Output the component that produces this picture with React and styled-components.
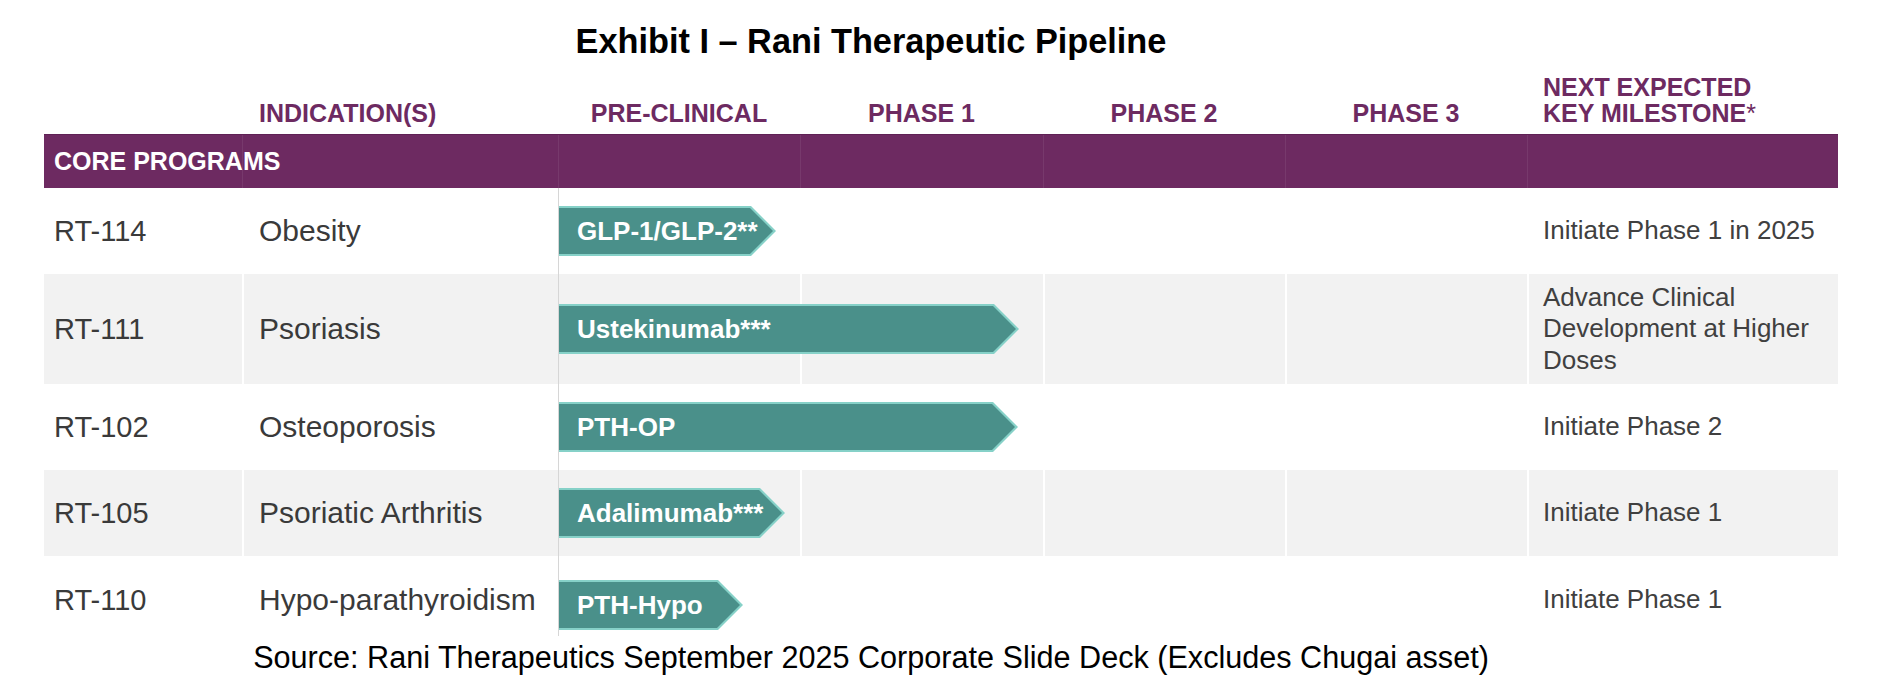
import React from 'react';
import styled, { createGlobalStyle } from 'styled-components';

const GlobalStyle = createGlobalStyle`
  html, body {
    margin: 0;
    padding: 0;
    background: #fff;
  }
  body {
    font-family: "Liberation Sans", Arial, sans-serif;
  }
`;

// column widths of the pipeline table
const COLS = '198px 316px 242px 243px 242px 242px 311px';
const PURPLE = '#6d2a61';

const Page = styled.div`
  width: 1886px;
  height: 694px;
  overflow: hidden;
  background: #fff;
`;

const Title = styled.h1`
  margin: 0;
  padding: 21px 144px 0 0;
  font-size: 34.3px;
  line-height: 40px;
  font-weight: bold;
  text-align: center;
  color: #000;
`;

const Table = styled.div`
  margin-left: 44px;
  width: 1794px;
`;

const HeadRow = styled.div`
  display: grid;
  grid-template-columns: ${COLS};
  align-items: end;
  height: 73px;
  box-sizing: border-box;
  padding-bottom: 8px;
`;

const HeadCell = styled.div`
  font-size: 25px;
  line-height: 26px;
  font-weight: bold;
  color: ${PURPLE};
  text-align: ${(p) => (p.$center ? 'center' : 'left')};
  padding-left: ${(p) => p.$pad || 0}px;
`;

const Star = styled.span`
  font-weight: normal;
`;

const Band = styled.div`
  display: grid;
  grid-template-columns: ${COLS};
  height: 54px;
  box-sizing: border-box;
  border-top: 1px solid #5f2155;
  background: ${PURPLE};
`;

const BandCell = styled.div`
  grid-row: 1;
  grid-column: ${(p) => p.$col};
  border-left: ${(p) => (p.$col === 1 ? 'none' : '1px solid rgba(255, 255, 255, 0.07)')};
`;

const BandLabel = styled.div`
  grid-row: 1;
  grid-column: 1 / 4;
  align-self: center;
  padding-left: 10px;
  font-size: 25px;
  font-weight: bold;
  color: #fff;
`;

const Row = styled.div`
  display: grid;
  grid-template-columns: ${COLS};
  height: ${(p) => p.$h}px;
`;

const Cell = styled.div`
  grid-row: 1;
  grid-column: ${(p) => p.$col};
  display: flex;
  align-items: center;
  box-sizing: border-box;
  padding-top: ${(p) => p.$dy || 0}px;
  background: ${(p) => (p.$shade ? '#f2f2f2' : '#fff')};
  border-left: ${(p) => {
    if (p.$col === 1) return 'none';
    if (p.$col === 3) return '1px solid #d6d6d6';
    return '2px solid #fff';
  }};
  color: #3a3a3a;
`;

const Code = styled.span`
  padding-left: 10px;
  font-size: 29px;
`;

const Indication = styled.span`
  padding-left: 15px;
  font-size: 30px;
  white-space: nowrap;
`;

const Milestone = styled.span`
  padding: 0 8px 0 14px;
  font-size: 26px;
  line-height: 31.5px;
  color: #404040;
`;

const Arrow = styled.div`
  grid-row: 1;
  grid-column: 3 / 8;
  justify-self: start;
  align-self: center;
  margin-left: 1px;
  margin-top: ${(p) => p.$dy || 0}px;
  height: 50px;
  box-sizing: border-box;
  padding: 2px 3px 2px 0;
  background: #86d1c8;
  clip-path: polygon(0 0, calc(100% - 25px) 0, 100% 50%, calc(100% - 25px) 100%, 0 100%);
`;

const ArrowFill = styled.div`
  display: flex;
  align-items: center;
  height: 100%;
  padding-left: 18px;
  background: #4a908a;
  clip-path: polygon(0 0, calc(100% - 23px) 0, 100% 50%, calc(100% - 23px) 100%, 0 100%);
  font-size: 26px;
  font-weight: bold;
  color: #fff;
  white-space: nowrap;
`;

const Source = styled.p`
  margin: 3px 0 0;
  padding-right: 144px;
  font-size: 30.6px;
  line-height: 36px;
  text-align: center;
  color: #000;
`;

const programs = [
  { code: 'RT-114', indication: 'Obesity', drug: 'GLP-1/GLP-2**', width: 217, milestone: 'Initiate Phase 1 in 2025', h: 86 },
  { code: 'RT-111', indication: 'Psoriasis', drug: 'Ustekinumab***', width: 460, milestone: 'Advance Clinical Development at Higher Doses', h: 110, shade: true },
  { code: 'RT-102', indication: 'Osteoporosis', drug: 'PTH-OP', width: 459, milestone: 'Initiate Phase 2', h: 86 },
  { code: 'RT-105', indication: 'Psoriatic Arthritis', drug: 'Adalimumab***', width: 226, milestone: 'Initiate Phase 1', h: 86, shade: true },
  { code: 'RT-110', indication: 'Hypo-parathyroidism', drug: 'PTH-Hypo', width: 184, milestone: 'Initiate Phase 1', h: 80, dy: 8, arrowDy: 18 },
];

export default function App() {
  return (
    <Page>
      <GlobalStyle />
      <Title>Exhibit I – Rani Therapeutic Pipeline</Title>
      <Table>
        <HeadRow>
          <HeadCell />
          <HeadCell $pad={17}>INDICATION(S)</HeadCell>
          <HeadCell $center>PRE-CLINICAL</HeadCell>
          <HeadCell $center>PHASE 1</HeadCell>
          <HeadCell $center>PHASE 2</HeadCell>
          <HeadCell $center>PHASE 3</HeadCell>
          <HeadCell $pad={16}>
            NEXT EXPECTED
            <br />
            KEY MILESTONE<Star>*</Star>
          </HeadCell>
        </HeadRow>

        <Band>
          {[1, 2, 3, 4, 5, 6, 7].map((col) => (
            <BandCell key={col} $col={col} />
          ))}
          <BandLabel>CORE PROGRAMS</BandLabel>
        </Band>

        {programs.map((p) => (
          <Row key={p.code} $h={p.h}>
            <Cell $col={1} $shade={p.shade} $dy={p.dy}>
              <Code>{p.code}</Code>
            </Cell>
            <Cell $col={2} $shade={p.shade} $dy={p.dy}>
              <Indication>{p.indication}</Indication>
            </Cell>
            <Cell $col={3} $shade={p.shade} />
            <Cell $col={4} $shade={p.shade} />
            <Cell $col={5} $shade={p.shade} />
            <Cell $col={6} $shade={p.shade} />
            <Cell $col={7} $shade={p.shade} $dy={p.dy}>
              <Milestone>{p.milestone}</Milestone>
            </Cell>
            <Arrow style={{ width: p.width }} $dy={p.arrowDy}>
              <ArrowFill>{p.drug}</ArrowFill>
            </Arrow>
          </Row>
        ))}
      </Table>
      <Source>Source: Rani Therapeutics September 2025 Corporate Slide Deck (Excludes Chugai asset)</Source>
    </Page>
  );
}
